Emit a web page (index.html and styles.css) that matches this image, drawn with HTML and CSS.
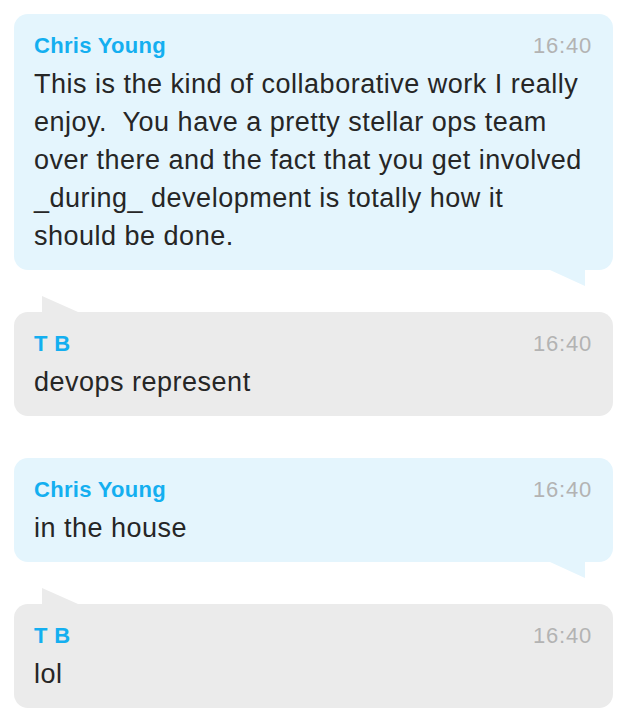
FILE: index.html
```html
<!DOCTYPE html>
<html lang="en">
<head>
<meta charset="utf-8">
<title>Chat</title>
<link rel="stylesheet" href="styles.css">
</head>
<body>
<div class="thread">
  <div class="msg msg-them">
    <div class="msg-head"><span class="msg-name">Chris Young</span><span class="msg-time">16:40</span></div>
    <div class="msg-text">This is the kind of collaborative work I really enjoy.  You have a pretty stellar ops team over there and the fact that you get involved _during_ development is totally how it should be done.</div>
  </div>
  <div class="msg msg-me">
    <div class="msg-head"><span class="msg-name">T B</span><span class="msg-time">16:40</span></div>
    <div class="msg-text">devops represent</div>
  </div>
  <div class="msg msg-them">
    <div class="msg-head"><span class="msg-name">Chris Young</span><span class="msg-time">16:40</span></div>
    <div class="msg-text">in the house</div>
  </div>
  <div class="msg msg-me">
    <div class="msg-head"><span class="msg-name">T B</span><span class="msg-time">16:40</span></div>
    <div class="msg-text">lol</div>
  </div>
</div>
</body>
</html>
```
FILE: styles.css
```css
html, body {
  margin: 0;
  padding: 0;
  background: #ffffff;
}

body {
  font-family: "Liberation Sans", Arial, sans-serif;
  color: #262626;
}

.thread {
  display: flex;
  flex-direction: column;
  gap: 42px;
  padding: 14px 12px 14px 14px;
}

.msg {
  position: relative;
  border-radius: 14px;
  padding: 19px 21px 15px 20px;
}

.msg-them {
  background: #e4f5fd;
}

.msg-me {
  background: #ebebeb;
}

.msg-them::after {
  content: "";
  position: absolute;
  top: 100%;
  right: 28px;
  width: 35px;
  height: 16px;
  background: #e4f5fd;
  clip-path: polygon(0 0, 100% 0, 100% 100%);
}

.msg-me::before {
  content: "";
  position: absolute;
  bottom: 100%;
  left: 28px;
  width: 36px;
  height: 16px;
  background: #ebebeb;
  clip-path: polygon(0 0, 100% 100%, 0 100%);
}

.msg-head {
  display: flex;
  justify-content: space-between;
  align-items: baseline;
  line-height: 26px;
}

.msg-name {
  font-size: 22px;
  font-weight: bold;
  letter-spacing: 0.3px;
  color: #14aff0;
}

.msg-time {
  font-size: 22px;
  letter-spacing: 0.8px;
  color: #b3b3b3;
}

.msg-text {
  margin-top: 6px;
  font-size: 27px;
  line-height: 38px;
  letter-spacing: 0.5px;
  white-space: pre-wrap;
}
```
